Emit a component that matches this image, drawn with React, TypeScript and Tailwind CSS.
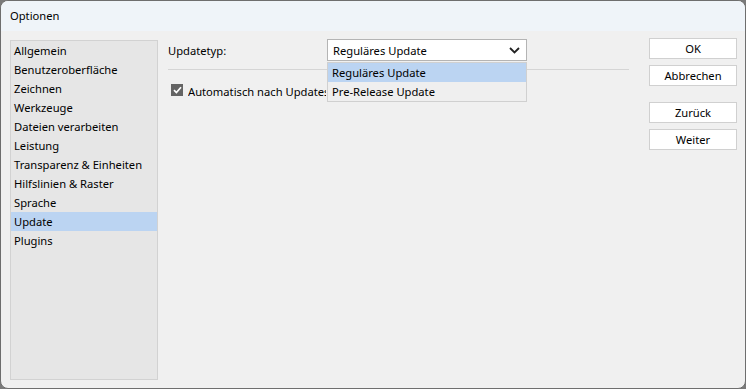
import React from "react";

const items = [
  "Allgemein",
  "Benutzeroberfläche",
  "Zeichnen",
  "Werkzeuge",
  "Dateien verarbeiten",
  "Leistung",
  "Transparenz & Einheiten",
  "Hilfslinien & Raster",
  "Sprache",
  "Update",
  "Plugins",
];

function Btn({ label, className = "" }: { label: string; className?: string }) {
  return (
    <div
      className={`w-[88px] h-[21px] bg-white border border-[#d0d0d0] flex items-center justify-center pt-[2px] text-[11.2px] text-black ${className}`}
    >
      {label}
    </div>
  );
}

export default function App() {
  return (
    <div className="w-[746px] h-[389px] bg-[#7a7a7a] overflow-hidden">
      <div
        className="w-[746px] h-[389px] rounded-[8px] border border-[#6e6e6e] bg-[#f0f0f0] overflow-hidden flex flex-col text-black"
        style={{ fontFamily: '"Segoe UI", "Noto Sans", sans-serif' }}
      >
        <div className="h-[30px] bg-[#eff4f9] flex items-center pl-[9px] text-[11.2px] shrink-0">
          Optionen
        </div>
        <div className="flex flex-1 pl-[9px] pr-[8px]">
          <div className="w-[148px] mt-[9px] mb-[8px] bg-[#e6e6e6] border border-[#d2d2d2] flex flex-col">
            {items.map((it) => (
              <div
                key={it}
                className={`h-[19px] flex items-center pl-[3px] pt-[2px] text-[11.2px] ${
                  it === "Update" ? "bg-[#bbd4f2]" : ""
                }`}
              >
                {it}
              </div>
            ))}
          </div>
          <div className="flex-1 ml-[10px] mr-[20px] pt-[8px] flex flex-col">
            <div className="flex items-center h-[22px] relative">
              <div className="w-[159px] text-[11.2px] pt-[2px]">Updatetyp:</div>
              <div className="relative">
                <div className="w-[200px] h-[22px] bg-white border border-[#b4b4b4] flex items-center justify-between pl-[5px] pr-[6px] text-[11.2px]">
                  <span className="pt-[2px]">Reguläres Update</span>
                  <svg width="11" height="7" viewBox="0 0 11 7">
                    <path d="M1 1 L5.5 5.5 L10 1" fill="none" stroke="#222" strokeWidth="1.8" />
                  </svg>
                </div>
                <div className="absolute left-0 top-[23px] w-[200px] h-[40px] border border-[#d0d0d0] bg-[#efefef] z-10 flex flex-col">
                  <div className="h-[19px] bg-[#bbd4f2] flex items-center pl-[4px] pt-[1px] text-[11.2px]">
                    Reguläres Update
                  </div>
                  <div className="h-[19px] flex items-center pl-[4px] pt-[1px] text-[11.2px]">
                    Pre-Release Update
                  </div>
                </div>
              </div>
            </div>
            <div className="h-px bg-[#d5d5d5] mt-[8px]" />
            <div className="flex items-center mt-[13px] pl-[3px] h-[14px]">
              <div className="w-[12px] h-[12px] bg-[#646464] flex items-center justify-center shrink-0">
                <svg width="9" height="8" viewBox="0 0 9 8">
                  <path d="M1 4.2 L3.4 6.5 L8 1.3" fill="none" stroke="white" strokeWidth="1.7" />
                </svg>
              </div>
              <div className="ml-[5px] w-[138px] overflow-hidden">
                <span className="text-[11.2px] whitespace-nowrap">Automatisch nach Updates suchen</span>
              </div>
            </div>
          </div>
          <div className="flex flex-col pt-[7px]">
            <Btn label="OK" />
            <Btn label="Abbrechen" className="mt-[6px]" />
            <Btn label="Zurück" className="mt-[16px]" />
            <Btn label="Weiter" className="mt-[6px]" />
          </div>
        </div>
      </div>
    </div>
  );
}
